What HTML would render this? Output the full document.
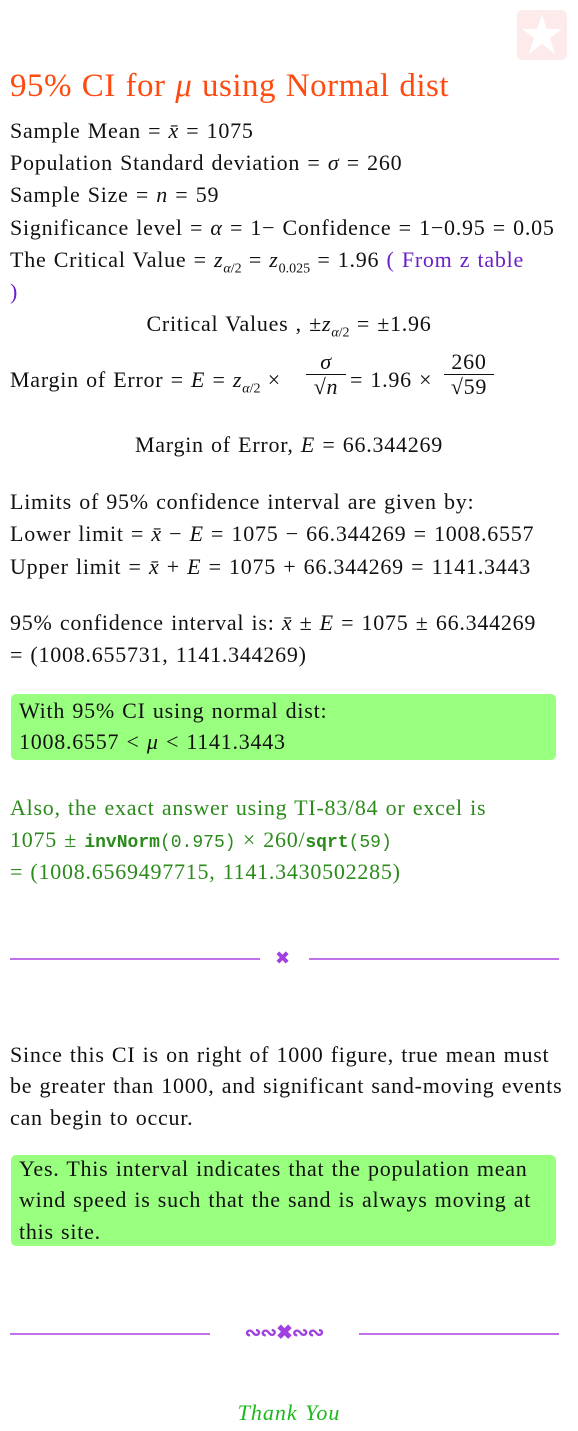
<!DOCTYPE html>
<html><head><meta charset="utf-8"><style>
body{margin:0;background:#fff;width:578px;height:1431px;position:relative;overflow:hidden;font-family:"Liberation Serif",serif;font-size:22px;letter-spacing:0.75px;word-spacing:1px;color:#111}
.l{position:absolute;left:10px;white-space:nowrap;line-height:24px}
i{font-style:italic}
.c{position:absolute;left:0;width:578px;text-align:center;white-space:nowrap;line-height:24px}
.box{position:absolute;left:11px;width:545px;background:#99ff7f;border-radius:5px}
.g{color:#2a8a1a}
.p{color:#6a1fc8}
.hr{position:absolute;height:2px;background:#c070e8}
.m{font-family:"Liberation Mono",monospace;font-size:18px;letter-spacing:0}
sub{font-size:14px;letter-spacing:0}
</style></head><body>
<div style="position:absolute;left:517px;top:10px;width:50px;height:50px;background:#fdeaea;border-radius:5px"></div>
<svg style="position:absolute;left:517px;top:10px" width="50" height="50"><polygon points="25,5 30,19 45,19 33,28 38,44 25,34 12,44 17,28 5,19 20,19" fill="#fff"/></svg>
<div class="l" style="top:70px;font-size:33px;letter-spacing:0.5px;word-spacing:1px;color:#ff4a10;line-height:32px">95% CI for <i>μ</i> using Normal dist</div>
<div class="l" style="top:119px">Sample Mean = <i>x̄</i> = 1075</div>
<div class="l" style="top:151px">Population Standard deviation = <i>σ</i> = 260</div>
<div class="l" style="top:183px">Sample Size = <i>n</i> = 59</div>
<div class="l" style="top:216px">Significance level = <i>α</i> = 1− Confidence = 1−0.95 = 0.05</div>
<div class="l" style="top:248px">The Critical Value = <i>z</i><sub><i>α</i>/2</sub> = <i>z</i><sub>0.025</sub> = 1.96 <span class="p">( From z table</span></div>
<div class="l p" style="top:280px">)</div>
<div class="c" style="top:312px">Critical Values , ±<i>z</i><sub><i>α</i>/2</sub> = ±1.96</div>
<div class="l" style="top:368px">Margin of Error = <i>E</i> = <i>z</i><sub><i>α</i>/2</sub> ×</div>
<div style="position:absolute;left:306px;top:350px;width:40px;text-align:center;line-height:24px"><i>σ</i><div style="border-top:1px solid #111">√<i>n</i></div></div>
<div class="l" style="left:350px;top:368px">= 1.96 ×</div>
<div style="position:absolute;left:444px;top:350px;width:50px;text-align:center;line-height:24px">260<div style="border-top:1px solid #111">√59</div></div>
<div class="c" style="top:433px">Margin of Error, <i>E</i> = 66.344269</div>
<div class="l" style="top:490px">Limits of 95% confidence interval are given by:</div>
<div class="l" style="top:522px">Lower limit = <i>x̄</i> − <i>E</i> = 1075 − 66.344269 = 1008.6557</div>
<div class="l" style="top:555px">Upper limit = <i>x̄</i> + <i>E</i> = 1075 + 66.344269 = 1141.3443</div>
<div class="l" style="top:611px">95% confidence interval is: <i>x̄</i> ± <i>E</i> = 1075 ± 66.344269</div>
<div class="l" style="top:643px">= (1008.655731, 1141.344269)</div>
<div class="box" style="top:694px;height:66px"></div>
<div class="l" style="left:19px;top:699px">With 95% CI using normal dist:</div>
<div class="l" style="left:19px;top:730px">1008.6557 &lt; <i>μ</i> &lt; 1141.3443</div>
<div class="l g" style="top:796px">Also, the exact answer using TI-83/84 or excel is</div>
<div class="l g" style="top:828px">1075 ± <span class="m"><b>invNorm</b>(0.975)</span> × 260/<span class="m"><b>sqrt</b>(59)</span></div>
<div class="l g" style="top:860px">= (1008.6569497715, 1141.3430502285)</div>
<div class="hr" style="left:10px;top:958px;width:250px"></div>
<div class="hr" style="left:309px;top:958px;width:250px"></div>
<div style="position:absolute;left:275px;top:949px;color:#a040e0;font-size:18px;line-height:18px;letter-spacing:0">✖</div>
<div class="l" style="top:1043px">Since this CI is on right of 1000 figure, true mean must</div>
<div class="l" style="top:1074px">be greater than 1000, and significant sand-moving events</div>
<div class="l" style="top:1106px">can begin to occur.</div>
<div class="box" style="top:1155px;height:91px"></div>
<div class="l" style="left:19px;top:1157px">Yes. This interval indicates that the population mean</div>
<div class="l" style="left:19px;top:1188px">wind speed is such that the sand is always moving at</div>
<div class="l" style="left:19px;top:1220px">this site.</div>
<div class="hr" style="left:10px;top:1333px;width:200px"></div>
<div class="hr" style="left:359px;top:1333px;width:200px"></div>
<div style="position:absolute;left:232px;top:1322px;width:104px;text-align:center;color:#a040e0;font-size:20px;font-weight:bold;line-height:22px;white-space:nowrap;letter-spacing:-1px">∾∾✖∾∾</div>
<div class="c" style="top:1401px;color:#1cb81c;letter-spacing:1px"><i>Thank You</i></div>
</body></html>
